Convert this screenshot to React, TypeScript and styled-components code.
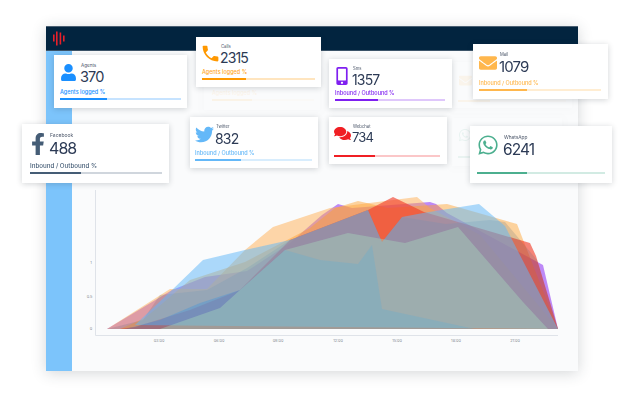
import type { ReactNode } from 'react';
import styled, { createGlobalStyle } from 'styled-components';
import { FaEnvelope, FaFacebookF, FaMobileAlt, FaTwitter, FaUser, FaWhatsapp, FaComments } from 'react-icons/fa';
import { MdPhone } from 'react-icons/md';

const GlobalStyle = createGlobalStyle`
  html, body { margin: 0; background: #fff; }
  body { font-family: Inter, "Liberation Sans", sans-serif; overflow: hidden; }
`;

// The source image is a scaled-down mockup, so everything is a touch soft.
const Stage = styled.div`
  position: relative;
  width: 642px;
  height: 401px;
  padding: 26px 64px 30px 46px;
  box-sizing: border-box;
  filter: blur(0.35px);
`;

const Window = styled.div`
  height: 100%;
  display: flex;
  flex-direction: column;
  box-shadow: 0 2px 14px rgba(40, 50, 60, 0.2);
`;

const Header = styled.header`
  height: 25px;
  flex: none;
  display: flex;
  align-items: center;
  padding-left: 7px;
  background: #02243f;
  border-top: 1px solid #4a5f72;
  border-bottom: 1px solid #3c5469;
  box-sizing: border-box;
`;

const Body = styled.div`
  flex: 1;
  display: flex;
  min-height: 0;
`;

const Sidebar = styled.aside`
  width: 26px;
  flex: none;
  background: #7cc4fb;
`;

const Main = styled.main`
  flex: 1;
  background: #fafbfc;
`;

const Chart = styled.svg`
  display: block;
`;

const Tick = styled.text`
  font-size: 3.8px;
  fill: #858b93;
  text-anchor: middle;
`;

// Cards float over the window and stick out past its edges.
const Card = styled.div<{ $x: number; $y: number; $w: number; $h: number; $pad: string; $ghost?: boolean }>`
  position: absolute;
  left: ${(p) => p.$x}px;
  top: ${(p) => p.$y}px;
  width: ${(p) => p.$w}px;
  height: ${(p) => p.$h}px;
  padding: ${(p) => p.$pad};
  box-sizing: border-box;
  display: flex;
  flex-direction: column;
  background: #fff;
  box-shadow: 0 1px 6px rgba(30, 40, 50, 0.2);
  opacity: ${(p) => (p.$ghost ? 0.09 : 1)};
`;

const Top = styled.div<{ $gap: number }>`
  display: flex;
  align-items: flex-start;
  gap: ${(p) => p.$gap}px;
`;

const IconSlot = styled.div<{ $color: string; $size: number; $drop: number; $w: number }>`
  flex: none;
  width: ${(p) => p.$w}px;
  display: flex;
  justify-content: center;
  margin-top: ${(p) => p.$drop}px;
  color: ${(p) => p.$color};
  font-size: ${(p) => p.$size}px;
  line-height: 0;

  svg {
    flex: none;
  }
`;

const Texts = styled.div<{ $gap: number }>`
  display: flex;
  flex-direction: column;
  gap: ${(p) => p.$gap}px;
`;

const Label = styled.div<{ $size: number }>`
  font-size: ${(p) => p.$size}px;
  line-height: 6px;
  color: #4a5568;
  padding-left: 1px;
`;

const Value = styled.div<{ $size: number }>`
  font-size: ${(p) => p.$size}px;
  line-height: ${(p) => p.$size + 1}px;
  letter-spacing: -0.06em;
  color: #2c3a55;
`;

const Meter = styled.div`
  margin-top: auto;
  display: flex;
  flex-direction: column;
  gap: 3px;
`;

const Caption = styled.div<{ $color: string; $size: number }>`
  font-size: ${(p) => p.$size}px;
  line-height: 6px;
  font-weight: 500;
  white-space: nowrap;
  color: ${(p) => p.$color};
`;

const Track = styled.div<{ $color: string }>`
  height: 2px;
  flex: none;
  background: ${(p) => p.$color}40;
`;

const Fill = styled.div<{ $color: string }>`
  height: 100%;
  background: ${(p) => p.$color};
`;

interface Tile {
  x: number;
  y: number;
  w: number;
  h: number;
  pad: string;
  gap: number;
  color: string;
  captionColor?: string;
  icon: ReactNode;
  iconSize: number;
  iconWidth: number;
  iconDrop: number;
  label?: string;
  labelSize?: number;
  value?: string;
  valueSize?: number;
  valueGap?: number;
  caption?: string;
  captionSize?: number;
  pct: number;
  ghost?: boolean;
}

const tiles: Tile[] = [
  { x: 204, y: 70, w: 116, h: 40, pad: '0 6px 9px 8px', gap: 0, color: '#ffa726', icon: null, iconSize: 0, iconWidth: 0, iconDrop: 0, caption: 'Agents logged %', captionSize: 5.5, pct: 39, ghost: true },
  { x: 452, y: 62, w: 120, h: 46, pad: '8px 6px 6px 6px', gap: 0, color: '#ffb74d', icon: <FaEnvelope />, iconSize: 13, iconWidth: 14, iconDrop: 4, pct: 30, ghost: true },
  { x: 452, y: 118, w: 110, h: 48, pad: '8px 6px 8px 6px', gap: 0, color: '#4caf8f', icon: <FaWhatsapp />, iconSize: 14, iconWidth: 14, iconDrop: 2, pct: 30, ghost: true },
  { x: 54, y: 55, w: 133, h: 53, pad: '8px 6px 8px 6px', gap: 3, color: '#1a8fff', icon: <FaUser />, iconSize: 17, iconWidth: 17, iconDrop: 1, label: 'Agents', labelSize: 4.6, value: '370', valueSize: 14.5, caption: 'Agents logged %', captionSize: 5.5, pct: 39 },
  { x: 196, y: 37, w: 125, h: 50, pad: '7px 6px 7px 6px', gap: 1, color: '#ff9800', captionColor: '#ffa726', icon: <MdPhone />, iconSize: 21, iconWidth: 17, iconDrop: -1, label: 'Calls', labelSize: 4.2, value: '2315', valueSize: 14, caption: 'Agents logged %', captionSize: 5.5, pct: 39 },
  { x: 22, y: 124, w: 147, h: 59, pad: '8px 7px 9px 8px', gap: 4, color: '#455d76', icon: <FaFacebookF />, iconSize: 22, iconWidth: 15, iconDrop: 1, label: 'Facebook', labelSize: 5, value: '488', valueSize: 16, valueGap: 1.5, caption: 'Inbound / Outbound %', captionSize: 6.2, pct: 39 },
  { x: 190, y: 117, w: 128, h: 51, pad: '7px 6px 7px 5px', gap: 1, color: '#64b8f8', icon: <FaTwitter />, iconSize: 19, iconWidth: 19, iconDrop: 1, label: 'Twitter', labelSize: 4.2, value: '832', valueSize: 14, valueGap: 1, caption: 'Inbound / Outbound %', captionSize: 5.5, pct: 39 },
  { x: 329, y: 59, w: 123, h: 49, pad: '7px 7px 7px 6px', gap: 4, color: '#7f1ff0', icon: <FaMobileAlt />, iconSize: 18, iconWidth: 13, iconDrop: 1, label: 'Sms', labelSize: 4.2, value: '1357', valueSize: 14, caption: 'Inbound / Outbound %', captionSize: 5.5, pct: 39 },
  { x: 329, y: 117, w: 118, h: 47, pad: '7px 7px 7px 5px', gap: 1, color: '#f01f24', icon: <FaComments />, iconSize: 17, iconWidth: 17, iconDrop: 1, label: 'Webchat', labelSize: 4.2, value: '734', valueSize: 13, pct: 39 },
  { x: 473, y: 44, w: 135, h: 55, pad: '8px 7px 8px 6px', gap: 2, color: '#ffb74d', icon: <FaEnvelope />, iconSize: 18, iconWidth: 18, iconDrop: 2, label: 'Mail', labelSize: 4.2, value: '1079', valueSize: 15, valueGap: 1, caption: 'Inbound / Outbound %', captionSize: 5.5, pct: 39 },
  { x: 470, y: 126, w: 142, h: 57, pad: '8px 7px 9px 7px', gap: 4, color: '#4caf8f', icon: <FaWhatsapp />, iconSize: 22, iconWidth: 22, iconDrop: 0, label: 'WhatsApp', labelSize: 4.8, value: '6241', valueSize: 15.5, valueGap: 2, pct: 39 },
];

// Stacked series, bottom layer first. Coordinates are page pixels.
const layers = [
  { fill: '#8a2bf2', alpha: 0.55, points: '107,329 172,290 205,277 247,271 290,243 322,215 338,204 352,208 430,202 436,204 447,213 543,265 558,329' },
  { fill: '#ffb054', alpha: 0.5, points: '107,329 170,289 207,289 245,250 273,227 330,208 417,197 430,208 480,235 558,329' },
  { fill: '#ffa02a', alpha: 0.45, points: '120,329 145,318 190,280 245,262 310,228 335,208 358,201 388,208 447,204 517,224 522,237 558,329' },
  { fill: '#f23a26', alpha: 0.62, points: '120,329 135,327 190,310 240,290 277,253 290,240 368,210 393,197 424,212 530,243 536,256 558,329' },
  { fill: '#586878', alpha: 0.2, points: '107,329 143,320 160,295 207,290 247,268 290,240 368,210 382,242 402,217 446,224 490,220 505,222 537,260 558,329' },
  { fill: '#62b8f8', alpha: 0.52, points: '135,325 172,290 203,260 245,250 290,240 368,210 382,242 402,217 423,213 479,204 505,226 558,329' },
  { fill: '#2a8fe8', alpha: 0.3, points: '125,329 160,320 200,303 240,290 285,250 320,260 358,264 372,245 382,309 475,329' },
  { fill: '#a4d2ba', alpha: 0.45, points: '160,329 220,308 240,290 285,250 348,233 405,243 458,227 523,302 548,329' },
];

const hours = [
  { x: 159, t: '03:00' },
  { x: 219, t: '06:00' },
  { x: 278, t: '09:00' },
  { x: 338, t: '12:00' },
  { x: 397, t: '15:00' },
  { x: 456, t: '18:00' },
  { x: 515, t: '21:00' },
];

function TileCard({ tile }: { tile: Tile }) {
  return (
    <Card $x={tile.x} $y={tile.y} $w={tile.w} $h={tile.h} $pad={tile.pad} $ghost={tile.ghost}>
      <Top $gap={tile.gap}>
        {tile.icon && (
          <IconSlot $color={tile.color} $size={tile.iconSize} $drop={tile.iconDrop} $w={tile.iconWidth}>
            {tile.icon}
          </IconSlot>
        )}
        {tile.value && (
          <Texts $gap={tile.valueGap ?? 0}>
            <Label $size={tile.labelSize ?? 4}>{tile.label}</Label>
            <Value $size={tile.valueSize ?? 14}>{tile.value}</Value>
          </Texts>
        )}
      </Top>
      <Meter>
        {tile.caption && (
          <Caption $color={tile.captionColor ?? tile.color} $size={tile.captionSize ?? 5}>
            {tile.caption}
          </Caption>
        )}
        <Track $color={tile.color}>
          <Fill $color={tile.color} style={{ width: `${tile.pct}%` }} />
        </Track>
      </Meter>
    </Card>
  );
}

export default function App() {
  return (
    <Stage>
      <GlobalStyle />
      <Window>
        <Header>
          <svg width="12" height="15" viewBox="0 0 12 15" fill="#e8202a">
            <rect x="0" y="3.5" width="1.6" height="7" />
            <rect x="3" y="0.5" width="1.6" height="14" />
            <rect x="6.6" y="1.5" width="1.6" height="12" />
            <rect x="10" y="4.5" width="1.6" height="6" />
          </svg>
        </Header>
        <Body>
          <Sidebar />
          <Main>
            <Chart width="506" height="320" viewBox="72 51 506 320">
              {layers.map((l) => (
                <polygon key={l.points} points={l.points} fill={l.fill} fillOpacity={l.alpha} />
              ))}
              <path d="M95.5 190V335.5H558" fill="none" stroke="#dfe3e9" strokeWidth="1" />
              <Tick x="91" y="263.5">1</Tick>
              <Tick x="89.5" y="297.5">0.5</Tick>
              <Tick x="91" y="330">0</Tick>
              {hours.map((h) => (
                <Tick key={h.t} x={h.x} y="342">{h.t}</Tick>
              ))}
            </Chart>
          </Main>
        </Body>
      </Window>
      {tiles.map((t) => (
        <TileCard key={`${t.x}-${t.y}`} tile={t} />
      ))}
    </Stage>
  );
}
